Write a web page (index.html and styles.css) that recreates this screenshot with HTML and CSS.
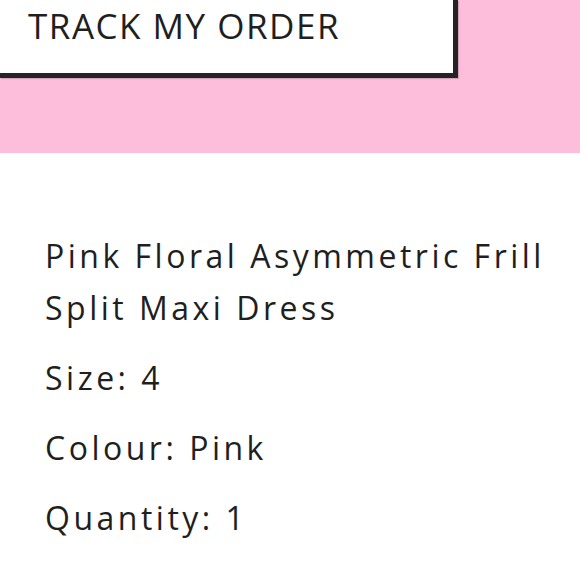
FILE: index.html
```html
<!DOCTYPE html>
<html>
<head>
<meta charset="utf-8">
<link rel="stylesheet" href="styles.css">
</head>
<body>
<header class="band">
  <div class="track-box">
    <h1 class="track-title">TRACK MY ORDER</h1>
  </div>
</header>
<main class="details">
  <p class="line">Pink Floral Asymmetric Frill Split Maxi Dress</p>
  <p class="line">Size: 4</p>
  <p class="line">Colour: Pink</p>
  <p class="line">Quantity: 1</p>
</main>
</body>
</html>
```
FILE: styles.css
```css
html, body {
  margin: 0;
  padding: 0;
  background: #ffffff;
}
body {
  width: 580px;
  height: 580px;
  overflow: hidden;
  font-family: "Open Sans", "Noto Sans", sans-serif;
  color: #1f1f1f;
}
.band {
  background: #fdbedc;
  height: 153px;
}
.track-box {
  box-sizing: border-box;
  width: 458px;
  height: 78px;
  background: #ffffff;
  border-right: 5px solid #242424;
  border-bottom: 5px solid #242424;
  box-shadow: 1px 1px 1px rgba(0,0,0,0.15);
}
.track-title {
  margin: 0;
  padding: 8px 0 0 28px;
  font-size: 35px;
  line-height: 35px;
  font-weight: 400;
  letter-spacing: 1.5px;
  color: #1f1f1f;
}
.details {
  padding: 77px 20px 0 45px;
}
.line {
  margin: 0 0 18px 0;
  font-size: 32px;
  line-height: 52px;
  letter-spacing: 3.5px;
}
```
